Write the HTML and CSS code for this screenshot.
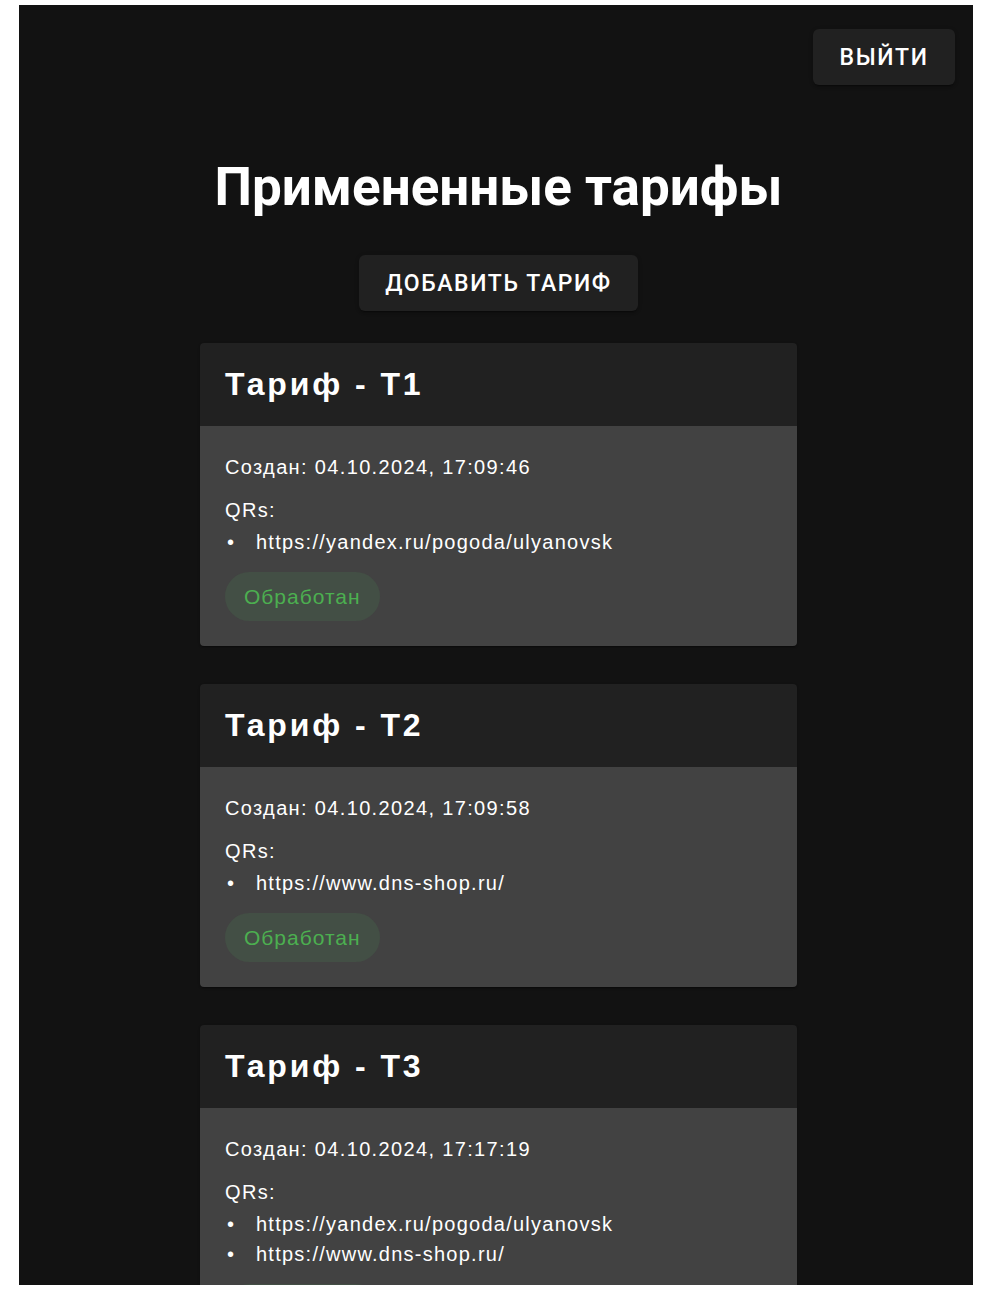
FILE: index.html
```html
<!DOCTYPE html>
<html lang="ru">
<head>
<meta charset="utf-8">
<title>Примененные тарифы</title>
<link rel="stylesheet" href="styles.css">
</head>
<body>
<div class="app">
  <header class="topbar">
    <button class="btn btn-logout">Выйти</button>
  </header>
  <main class="content">
    <h1 class="page-title">Примененные тарифы</h1>
    <button class="btn btn-add">Добавить тариф</button>
    <div class="card-list">
      <section class="card">
        <div class="card-head"><h2 class="card-title">Тариф - T1</h2></div>
        <div class="card-body">
          <p class="line">Создан: 04.10.2024, 17:09:46</p>
          <p class="line label">QRs:</p>
          <ul class="qr-list">
            <li>https://yandex.ru/pogoda/ulyanovsk</li>
          </ul>
          <span class="chip">Обработан</span>
        </div>
      </section>
      <section class="card">
        <div class="card-head"><h2 class="card-title">Тариф - T2</h2></div>
        <div class="card-body">
          <p class="line">Создан: 04.10.2024, 17:09:58</p>
          <p class="line label">QRs:</p>
          <ul class="qr-list">
            <li>https://www.dns-shop.ru/</li>
          </ul>
          <span class="chip">Обработан</span>
        </div>
      </section>
      <section class="card">
        <div class="card-head"><h2 class="card-title">Тариф - T3</h2></div>
        <div class="card-body">
          <p class="line">Создан: 04.10.2024, 17:17:19</p>
          <p class="line label">QRs:</p>
          <ul class="qr-list">
            <li>https://yandex.ru/pogoda/ulyanovsk</li>
            <li>https://www.dns-shop.ru/</li>
          </ul>
          <span class="chip">Обработан</span>
        </div>
      </section>
    </div>
  </main>
</div>
</body>
</html>
```
FILE: styles.css
```css
* { box-sizing: border-box; }
html, body { height: 100%; }
body {
  margin: 0;
  padding: 5px 20px 5px 19px;
  background: #ffffff;
  overflow: hidden;
}
.app {
  height: 100%;
  background: #121212;
  overflow: hidden;
  color: #ffffff;
  font-family: "Liberation Sans", Arial, sans-serif;
}
.topbar {
  display: flex;
  justify-content: flex-end;
  padding: 24px 18px 0 0;
}
.btn {
  font-family: Roboto, "Noto Sans", sans-serif;
  font-weight: 500;
  font-size: 23px;
  letter-spacing: 1.6px;
  text-transform: uppercase;
  color: #ffffff;
  background: #212121;
  border: none;
  border-radius: 6px;
  height: 56px;
  padding: 0;
  box-shadow: 0 3px 1px -2px rgba(0,0,0,0.2), 0 2px 2px 0 rgba(0,0,0,0.14), 0 1px 5px 0 rgba(0,0,0,0.12);
}
.btn-logout { width: 142px; }
.btn-add { width: 279px; margin-top: 36px; }
.content {
  display: flex;
  flex-direction: column;
  align-items: center;
  padding-left: 5px;
}
.page-title {
  margin: 70px 0 0;
  font-family: Roboto, "Noto Sans", sans-serif;
  font-weight: 700;
  font-size: 53px;
  line-height: 64px;
  letter-spacing: 0;
}
.card-list {
  margin-top: 32px;
  width: 597px;
  display: flex;
  flex-direction: column;
  gap: 38px;
}
.card {
  border-radius: 4px;
  overflow: hidden;
  box-shadow: 0 2px 1px -1px rgba(0,0,0,0.2), 0 1px 1px 0 rgba(0,0,0,0.14), 0 1px 3px 0 rgba(0,0,0,0.12);
}
.card-head {
  background: #212121;
  height: 83px;
  display: flex;
  align-items: center;
  padding: 0 25px;
}
.card-title {
  margin: 0;
  font-family: "Liberation Sans", Arial, sans-serif;
  font-weight: 700;
  font-size: 32px;
  letter-spacing: 2.9px;
}
.card-body {
  background: #424242;
  padding: 26px 25px 25px;
  font-size: 20px;
  line-height: 30px;
  letter-spacing: 1.35px;
}
.line { margin: 0; }
.label { margin-top: 13px; }
.qr-list {
  margin: 2px 0 0;
  padding: 0;
  list-style: none;
}
.qr-list li {
  display: flex;
}
.qr-list li::before {
  content: "•";
  flex: 0 0 29px;
  padding-left: 2px;
  letter-spacing: 0;
}
.qr-list li { letter-spacing: 1.25px; }
.chip {
  display: inline-flex;
  align-items: center;
  margin-top: 15px;
  height: 49px;
  padding: 0 19px;
  border-radius: 25px;
  background: #434f45;
  color: #4caf50;
  font-size: 21px;
  letter-spacing: 1px;
}
```
